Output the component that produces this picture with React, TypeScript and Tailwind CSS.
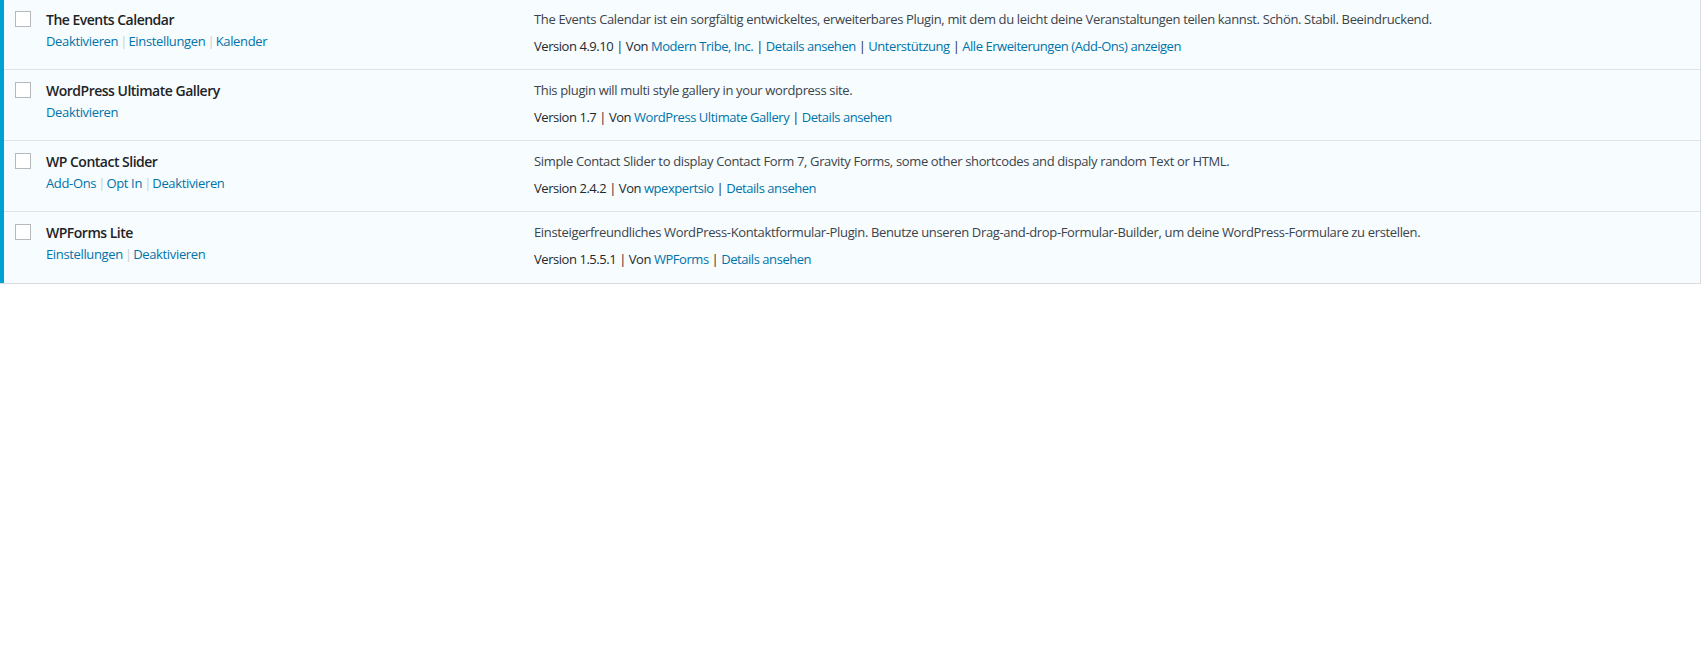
import React from 'react';

type Plugin = {
  name: string;
  actions: string[];
  description: string;
  version: string;
  author: string;
  links: string[];
};

const plugins: Plugin[] = [
  {
    name: 'The Events Calendar',
    actions: ['Deaktivieren', 'Einstellungen', 'Kalender'],
    description:
      'The Events Calendar ist ein sorgfältig entwickeltes, erweiterbares Plugin, mit dem du leicht deine Veranstaltungen teilen kannst. Schön. Stabil. Beeindruckend.',
    version: '4.9.10',
    author: 'Modern Tribe, Inc.',
    links: ['Details ansehen', 'Unterstützung', 'Alle Erweiterungen (Add-Ons) anzeigen'],
  },
  {
    name: 'WordPress Ultimate Gallery',
    actions: ['Deaktivieren'],
    description: 'This plugin will multi style gallery in your wordpress site.',
    version: '1.7',
    author: 'WordPress Ultimate Gallery',
    links: ['Details ansehen'],
  },
  {
    name: 'WP Contact Slider',
    actions: ['Add-Ons', 'Opt In', 'Deaktivieren'],
    description:
      'Simple Contact Slider to display Contact Form 7, Gravity Forms, some other shortcodes and dispaly random Text or HTML.',
    version: '2.4.2',
    author: 'wpexpertsio',
    links: ['Details ansehen'],
  },
  {
    name: 'WPForms Lite',
    actions: ['Einstellungen', 'Deaktivieren'],
    description:
      'Einsteigerfreundliches WordPress-Kontaktformular-Plugin. Benutze unseren Drag-and-drop-Formular-Builder, um deine WordPress-Formulare zu erstellen.',
    version: '1.5.5.1',
    author: 'WPForms',
    links: ['Details ansehen'],
  },
];

function PluginRow({ p, last }: { p: Plugin; last: boolean }) {
  return (
    <div
      className={
        'flex h-[71px] bg-[#f7fcfe] border-l-4 border-[#00a0d2] ' +
        (last ? '' : 'shadow-[inset_0_-1px_0_#dfe3e6]')
      }
    >
      {/* checkbox */}
      <div className="w-[38px] shrink-0 pl-[11px] pt-[12px]">
        <div className="w-4 h-4 bg-white border border-[#b4b9be]" />
      </div>

      {/* title + actions */}
      <div className="w-[482px] shrink-0 pl-[4px] pt-[10px]">
        <div className="text-[14px] leading-[21px] font-semibold tracking-[-0.5px] text-[#1d2327]">
          {p.name}
        </div>
        <div className="mt-px text-[13px] leading-[20px] tracking-[-0.35px] text-[#0073aa]">
          {p.actions.map((a, i) => (
            <span key={a}>
              {i > 0 && <span className="text-[#c8cdd1] tracking-[-1.2px]"> | </span>}
              {a}
            </span>
          ))}
        </div>
      </div>

      {/* description */}
      <div className="flex-1 pl-[10px] pt-[10px] text-[13px] leading-[20px]">
        <p className="tracking-[-0.35px] text-[#3c434a]">{p.description}</p>
        <p className="mt-[7px] tracking-[-0.45px] text-[#23282d]">
          Version {p.version} | Von <span className="text-[#0073aa]">{p.author}</span>
          {p.links.map((l) => (
            <span key={l}>
              {' | '}
              <span className="text-[#0073aa]">{l}</span>
            </span>
          ))}
        </p>
      </div>
    </div>
  );
}

export default function App() {
  return (
    <div
      className="min-h-screen bg-white"
      style={{ fontFamily: '"Open Sans", "Noto Sans", sans-serif' }}
    >
      <div className="w-[1701px] -mt-px border-r border-b border-[#dcdcde]">
        {plugins.map((p, i) => (
          <PluginRow key={p.name} p={p} last={i === plugins.length - 1} />
        ))}
      </div>
    </div>
  );
}
